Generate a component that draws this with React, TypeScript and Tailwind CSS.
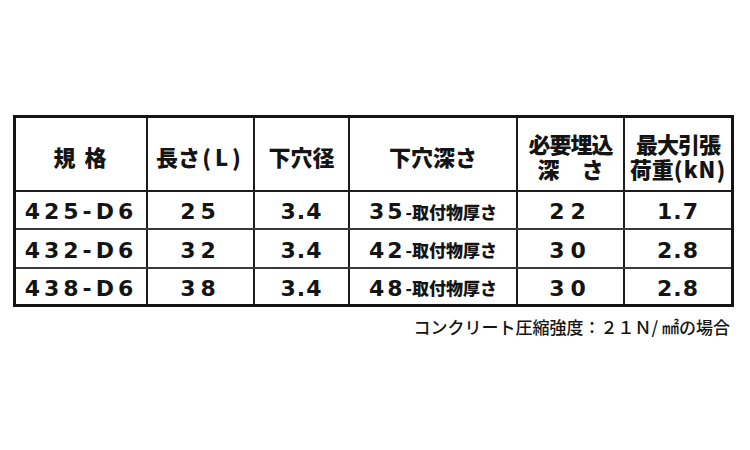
const jp = { fontFamily: '"Noto Sans CJK JP", "Noto Sans", sans-serif' };
const num = { fontFamily: '"DejaVu Sans", "Noto Sans CJK JP", sans-serif' };

const rows = [
  { code: "425-D6", len: "25", hole: "3.4", depth: "35", embed: "22", load: "1.7" },
  { code: "432-D6", len: "32", hole: "3.4", depth: "42", embed: "30", load: "2.8" },
  { code: "438-D6", len: "38", hole: "3.4", depth: "48", embed: "30", load: "2.8" },
];

const widths = ["w-[130px]", "w-[107px]", "w-[95px]", "w-[168px]", "w-[107px]", "w-[108px]"];
const heights = ["h-[38px]", "h-[39px]", "h-[37px]"];

function Cell({ i, className = "", children }: { i: number; className?: string; children: React.ReactNode }) {
  return (
    <div
      className={`${widths[i]} ${i > 0 ? "border-l-2 border-[#1c1c1c]" : ""} flex shrink-0 items-center justify-center ${className}`}
    >
      {children}
    </div>
  );
}

export default function App() {
  return (
    <div className="h-[450px] w-[750px] bg-white text-[#141414]">
      <div className="pt-[115px] pl-[13px]">
        <div className="w-[721px] border-[3px] border-[#141414]">
          <div className="flex h-[72px] text-[22px] font-black" style={jp}>
            <Cell i={0} className="pt-[4px] tracking-[2px]">規 格</Cell>
            <Cell i={1} className="pt-[4px]">
              長さ<span className="ml-[2px] tracking-[4px]">(L)</span>
            </Cell>
            <Cell i={2} className="pt-[4px]">下穴径</Cell>
            <Cell i={3} className="pt-[4px]">下穴深さ</Cell>
            <Cell i={4} className="flex-col pt-[4px] leading-[25px]">
              <span className="tracking-[-1px]">必要埋込</span>
              <span>深　さ</span>
            </Cell>
            <Cell i={5} className="flex-col pt-[4px] leading-[25px]">
              <span className="tracking-[-1px]">最大引張</span>
              <span>
                荷重<span className="tracking-[1px]">(kN)</span>
              </span>
            </Cell>
          </div>
          {rows.map((r, idx) => (
            <div
              key={r.code}
              className={`flex ${heights[idx]} border-t-2 ${idx === 0 ? "border-[#1c1c1c]" : "border-[#3a3a3a]"} text-[22px] font-bold`}
              style={num}
            >
              <Cell i={0} className="pt-[3px] tracking-[4px]">{r.code}</Cell>
              <Cell i={1} className="pt-[3px] tracking-[5px]">{r.len}</Cell>
              <Cell i={2} className="pt-[3px] tracking-[1px]">{r.hole}</Cell>
              <Cell i={3} className="pt-[3px]">
                <span className="tracking-[3px]">{r.depth}</span>
                <span className="text-[17px] font-black" style={jp}>
                  -取付物厚さ
                </span>
              </Cell>
              <Cell i={4} className="pt-[3px] tracking-[6px]">{r.embed}</Cell>
              <Cell i={5} className="pt-[3px] tracking-[1px]">{r.load}</Cell>
            </div>
          ))}
        </div>
        <div className="mt-[9px] w-[717px] text-right text-[17px] font-medium leading-[22px]" style={jp}>
          コンクリート圧縮強度：２１Ｎ/ ㎟の場合
        </div>
      </div>
    </div>
  );
}
